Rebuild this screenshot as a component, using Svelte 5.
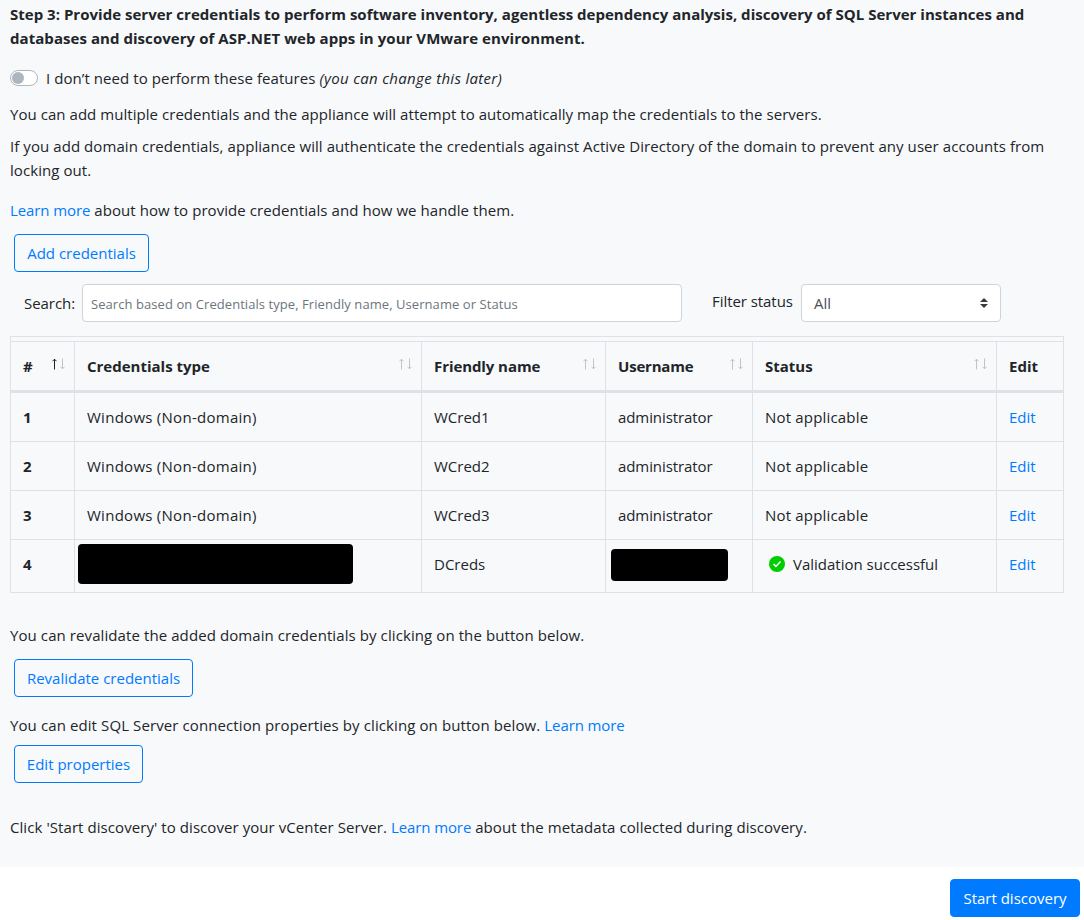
<script>
  const columns = [
    { label: '#', key: 'num', sort: 'asc' },
    { label: 'Credentials type', key: 'type', sort: 'none' },
    { label: 'Friendly name', key: 'friendly', sort: 'none' },
    { label: 'Username', key: 'user', sort: 'none' },
    { label: 'Status', key: 'status', sort: 'none' },
    { label: 'Edit', key: 'edit' }
  ];
  const rows = [
    { id: 1, type: 'Windows (Non-domain)', name: 'WCred1', user: 'administrator', status: 'Not applicable' },
    { id: 2, type: 'Windows (Non-domain)', name: 'WCred2', user: 'administrator', status: 'Not applicable' },
    { id: 3, type: 'Windows (Non-domain)', name: 'WCred3', user: 'administrator', status: 'Not applicable' },
    { id: 4, name: 'DCreds', status: 'Validation successful', ok: true }
  ];
</script>

<main>
  <section class="panel">
    <h1><span class="h-first">Step 3: Provide server credentials to perform software inventory, agentless dependency analysis, discovery of SQL Server instances and</span><br /><span class="h-second">databases and discovery of ASP.NET web apps in your VMware environment.</span></h1>

    <div class="toggle-row">
      <span class="switch"><span class="knob"></span></span>
      <span class="toggle-label">I don’t need to perform these features <em>(you can change this later)</em></span>
    </div>

    <p class="multi">You can add multiple credentials and the appliance will attempt to automatically map the credentials to the servers.</p>
    <p class="domain">If you add domain credentials, appliance will authenticate the credentials against Active Directory of the domain to prevent any user accounts from<br />locking out.</p>
    <p class="learn"><a>Learn more</a> about how to provide credentials and how we handle them.</p>

    <button class="outline add">Add credentials</button>

    <div class="filters">
      <span class="search-label">Search:</span>
      <div class="search"><span>Search based on Credentials type, Friendly name, Username or Status</span></div>
      <span class="filter-label">Filter status</span>
      <div class="select">
        <span>All</span>
        <svg width="8" height="10" viewBox="0 0 8 10"><path d="M4 0L0 4h8zM4 10L0 6h8z" fill="#343a40" /></svg>
      </div>
    </div>

    <div class="table">
      <div class="strip"></div>
      <div class="row head">
        {#each columns as c}
          <div class="cell {c.key}">
            <span>{c.label}</span>
            {#if c.sort}
              <svg class="sort" class:asc={c.sort === 'asc'} width="14" height="12" viewBox="0 0 14 12" fill="none">
                <path class="up" d="M3.5 11.5V1M1.5 3.2L3.5 1.2L5.5 3.2" />
                <path class="down" d="M11.5 .5V11M9.5 8.8L11.5 10.8L13.5 8.8" />
              </svg>
            {/if}
          </div>
        {/each}
      </div>
      {#each rows as r}
        <div class="row data" class:last={r.ok}>
          <div class="cell num"><b>{r.id}</b></div>
          <div class="cell type">
            {#if r.type}<span>{r.type}</span>{:else}<i class="block wide"></i>{/if}
          </div>
          <div class="cell friendly"><span>{r.name}</span></div>
          <div class="cell user">
            {#if r.user}<span>{r.user}</span>{:else}<i class="block"></i>{/if}
          </div>
          <div class="cell status" class:valid={r.ok}>
            {#if r.ok}
              <svg width="16" height="16" viewBox="0 0 16 16"><circle cx="8" cy="8" r="8" fill="#00cc00" /><path d="M4.5 8l2.4 2.4 4.6-4.8" fill="none" stroke="#fff" stroke-width="1.5" /></svg>
            {/if}
            <span>{r.status}</span>
          </div>
          <div class="cell edit"><a>Edit</a></div>
        </div>
      {/each}
    </div>

    <p class="revalidate-text">You can revalidate the added domain credentials by clicking on the button below.</p>
    <button class="outline revalidate">Revalidate credentials</button>
    <p class="sql-text">You can edit SQL Server connection properties by clicking on button below. <a>Learn more</a></p>
    <button class="outline properties">Edit properties</button>
    <p class="start-text">Click 'Start discovery' to discover your vCenter Server. <a>Learn more</a> about the metadata collected during discovery.</p>
  </section>
  <footer><button class="primary">Start discovery</button></footer>
</main>

<style>
  :global(body) { margin: 0; background: #fff; }
  main {
    width: 1084px;
    height: 920px;
    overflow: hidden;
    font: 15px/24px "Open Sans", "Noto Sans", sans-serif;
    color: #212529;
    white-space: nowrap;
  }
  .panel { height: 867px; padding: 2px 10px 0; background: #f8f9fb; box-sizing: border-box; }
  h1 { margin: 0; font: inherit; font-weight: 700; }
  .h-first { letter-spacing: 0.02px; }
  .h-second { letter-spacing: 0.055px; }
  p { margin: 0; letter-spacing: 0.07px; }
  a { color: #007bff; }
  p a { letter-spacing: -0.1px; }
  button { font: inherit; box-sizing: border-box; display: block; height: 38px; padding: 0; border-radius: 4px; text-align: center; }
  .outline { background: transparent; border: 1px solid #007bff; color: #007bff; margin-left: 4px; }
  .toggle-row { display: flex; align-items: center; margin-top: 16px; height: 24px; }
  .switch { width: 28px; height: 16px; box-sizing: border-box; border: 1px solid #adb5bd; border-radius: 8px; background: #fff; padding: 1px; margin-right: 8px; display: flex; }
  .knob { width: 12px; height: 12px; border-radius: 6px; background: #adb5bd; }
  .toggle-label { letter-spacing: 0.07px; }
  .toggle-label em { letter-spacing: 0.31px; }
  .multi { margin-top: 12px; letter-spacing: 0.047px; }
  .domain { margin-top: 8px; letter-spacing: 0.068px; }
  .learn { margin-top: 16px; }
  .add { width: 135px; margin-top: 12px; }
  .filters { display: flex; align-items: center; height: 38px; margin-top: 12px; }
  .search-label { width: 58px; margin-left: 14px; letter-spacing: -0.05px; }
  .search, .select { box-sizing: border-box; height: 38px; background: #fff; border: 1px solid #ced4da; border-radius: 4px; display: flex; align-items: center; }
  .search { width: 600px; padding: 2px 8px 0; font-size: 13px; letter-spacing: 0.065px; color: #6c757d; }
  .filter-label { width: 89px; margin-left: 30px; padding-bottom: 4px; letter-spacing: -0.06px; }
  .select { width: 200px; justify-content: space-between; padding: 0 12px; color: #495057; }
  .table { width: 1054px; box-sizing: border-box; margin-top: 14px; border: 1px solid #dee2e6; border-bottom: 0; }
  .strip { height: 4px; border-bottom: 1px solid #dee2e6; }
  .row { display: grid; grid-template-columns: 64px 347px 184px 147px 244px 66px; height: 49px; box-sizing: border-box; border-bottom: 1px solid #dee2e6; }
  .head { height: 51px; border-bottom: 3px solid #dee2e6; font-weight: 700; }
  .last { height: 53px; }
  .cell { display: flex; align-items: center; padding: 0 0 0 12px; border-right: 1px solid #dee2e6; box-sizing: border-box; }
  .cell.edit { border-right: 0; }
  .head .cell { justify-content: space-between; padding-right: 9px; }
  .head .friendly span { letter-spacing: -0.08px; }
  .head .user span { letter-spacing: -0.2px; }
  .data .type span { letter-spacing: 0.27px; }
  .data .status span { letter-spacing: 0.18px; }
  .data .user span { letter-spacing: -0.08px; }
  .last .cell { padding-bottom: 4px; }
  .last .status span { letter-spacing: 0; }
  .last .user { padding-bottom: 2px; }
  .sort { margin-bottom: 4px; stroke: #bfc2c6; stroke-width: 1; }
  .asc .up { stroke: #212529; }
  .block { width: 117px; height: 32px; border-radius: 4px; background: #000; margin-left: -7px; }
  .wide { width: 275px; height: 40px; margin-left: -9px; }
  .last .valid { padding-left: 16px; gap: 8px; }
  .revalidate-text { margin-top: 30px; letter-spacing: 0.09px; }
  .revalidate { width: 179px; margin-top: 12px; }
  .sql-text { margin-top: 16px; letter-spacing: 0.1px; }
  .properties { width: 129px; margin-top: 8px; }
  .start-text { margin-top: 32px; }
  footer { display: flex; justify-content: flex-end; padding: 12px 4px 0 0; }
  .primary { width: 130px; background: #007bff; color: #fff; border: 1px solid #007bff; }
</style>
